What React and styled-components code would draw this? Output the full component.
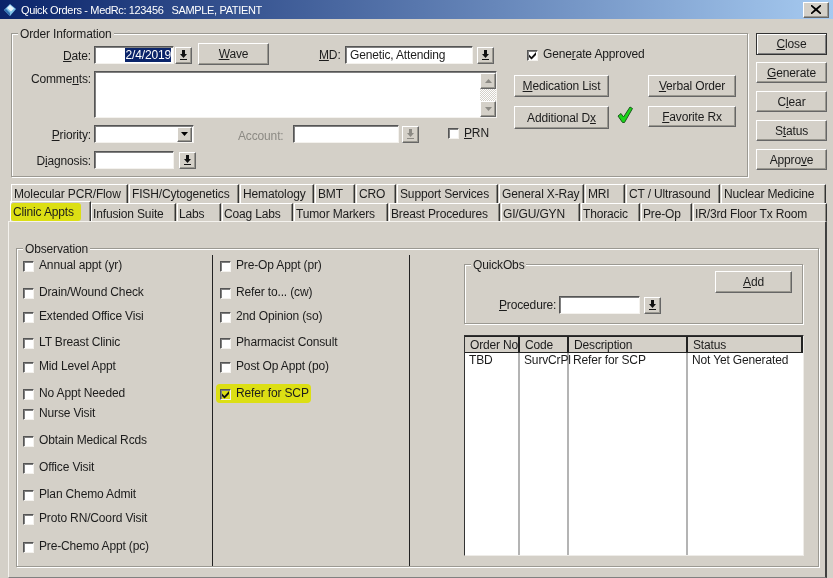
import React from 'react';
import styled, { createGlobalStyle, css } from 'styled-components';

const LEFT_ITEMS = [
  { text: 'Annual appt (yr)', gap: 0 },
  { text: 'Drain/Wound Check', gap: 7 },
  { text: 'Extended Office Visi', gap: 4 },
  { text: 'LT Breast Clinic', gap: 6 },
  { text: 'Mid Level Appt', gap: 4 },
  { text: 'No Appt Needed', gap: 7 },
  { text: 'Nurse Visit', gap: 0 },
  { text: 'Obtain Medical Rcds', gap: 7 },
  { text: 'Office Visit', gap: 7 },
  { text: 'Plan Chemo Admit', gap: 7 },
  { text: 'Proto RN/Coord Visit', gap: 4 },
  { text: 'Pre-Chemo Appt (pc)', gap: 8 },
];

const MIDDLE_ITEMS = [
  { text: 'Pre-Op Appt (pr)', gap: 0 },
  { text: 'Refer to... (cw)', gap: 7 },
  { text: '2nd Opinion (so)', gap: 4 },
  { text: 'Pharmacist Consult', gap: 6 },
  { text: 'Post Op Appt (po)', gap: 4 },
  { text: 'Refer for SCP', gap: 7, checked: true, marked: true },
];

const TOP_TABS = [
  ['Molecular PCR/Flow', 117],
  ['FISH/Cytogenetics', 110],
  ['Hematology', 74],
  ['BMT', 40],
  ['CRO', 40],
  ['Support Services', 101],
  ['General X-Ray', 85],
  ['MRI', 40],
  ['CT / Ultrasound', 94],
  ['Nuclear Medicine', 105],
];

const BOTTOM_TABS = [
  ['Infusion Suite', 85],
  ['Labs', 44],
  ['Coag Labs', 71],
  ['Tumor Markers', 94],
  ['Breast Procedures', 111],
  ['GI/GU/GYN', 79],
  ['Thoracic', 59],
  ['Pre-Op', 51],
  ['IR/3rd Floor Tx Room', 134],
];

const MARKER = '#dcdf14';

const raised = css`
  background: #d4d0c8;
  border: 1px solid;
  border-color: #fff #666 #666 #fff;
  box-shadow: inset -1px -1px 0 #9a9890;
`;

const sunken = css`
  background: #fff;
  border: 1px solid;
  border-color: #555 #f4f2ee #f4f2ee #555;
  box-shadow: inset 1px 1px 0 #808080;
`;

const etched = css`
  border: 1px solid #9b9992;
  box-shadow: 1px 1px 0 #fff, inset 1px 1px 0 #fff;
`;

const PickerArrow = ({ disabled }) => (
  <svg width="9" height="10" viewBox="0 0 9 10">
    <path
      d="M3 0h3v4h2L4.500 8 1 4h2zM1 9h7v1H1z"
      fill={disabled ? '#8c8a84' : '#111'}
    />
  </svg>
);

const Picker = ({ disabled, className }) => (
  <PickerButton className={className} type="button">
    <PickerArrow disabled={disabled} />
  </PickerButton>
);

const Check = () => (
  <svg width="9" height="9" viewBox="0 0 9 9">
    <path d="M1 3.500l2.500 2.500L8 1v3L3.500 8.500 1 6z" fill="#111" />
  </svg>
);

const Option = ({ text, checked, marked }) => (
  <OptionLabel $marked={marked}>
    <Box $marked={marked}>{checked && <Check />}</Box>
    {text}
  </OptionLabel>
);

const App = () => {
  return (
    <Window>
      <GlobalStyle />
      <TitleBar>
        <svg width="14" height="14" viewBox="0 0 14 14">
          <path d="M1 7l6-6 6 5-6 7z" fill="#7fc3e8" />
          <path d="M1 7l6 6v-3L3 6z" fill="#2f6fb0" />
          <path d="M4 5l3-3 4 3.500-3 3z" fill="#e6f4fb" />
        </svg>
        <TitleText>Quick Orders - MedRc: 123456&nbsp;&nbsp; SAMPLE, PATIENT</TitleText>
        <CloseBox type="button">
          <svg width="10" height="9" viewBox="0 0 10 9">
            <path d="M1 0l4 3.200L9 0h1v1.200L6.500 4.500 10 7.800V9H9L5 5.800 1 9H0V7.800l3.500-3.300L0 1.200V0z" fill="#000" />
          </svg>
        </CloseBox>
      </TitleBar>

      <TopArea>
        <OrderGroup>
          <Legend>Order Information</Legend>
          <FormColumn>
            <DateRow>
              <FieldLabel>
                <u>D</u>ate:
              </FieldLabel>
              <DateInput>
                <Selected>2/4/2019</Selected>
              </DateInput>
              <Picker />
              <WaveButton type="button">
                <u>W</u>ave
              </WaveButton>
              <MdLabel>
                <u>M</u>D:
              </MdLabel>
              <MdInput>Genetic, Attending</MdInput>
              <MdPicker />
            </DateRow>
            <CommentsRow>
              <FieldLabel>
                Comme<u>n</u>ts:
              </FieldLabel>
              <Comments>
                <Scrollbar>
                  <ScrollButton type="button">
                    <svg width="7" height="4" viewBox="0 0 7 4">
                      <path d="M3.500 0L7 4H0z" fill="#8c8a84" />
                    </svg>
                  </ScrollButton>
                  <ScrollTrack />
                  <ScrollButton type="button">
                    <svg width="7" height="4" viewBox="0 0 7 4">
                      <path d="M0 0h7L3.500 4z" fill="#8c8a84" />
                    </svg>
                  </ScrollButton>
                </Scrollbar>
              </Comments>
            </CommentsRow>
            <PriorityRow>
              <FieldLabel>
                <u>P</u>riority:
              </FieldLabel>
              <Select>
                <SelectButton type="button">
                  <svg width="7" height="4" viewBox="0 0 7 4">
                    <path d="M0 0h7L3.500 4z" fill="#000" />
                  </svg>
                </SelectButton>
              </Select>
              <AccountLabel>Account:</AccountLabel>
              <AccountInput />
              <Picker disabled />
              <PrnOption>
                <Box />
                <span>
                  <u>P</u>RN
                </span>
              </PrnOption>
            </PriorityRow>
            <DiagnosisRow>
              <FieldLabel>
                D<u>i</u>agnosis:
              </FieldLabel>
              <DateInput />
              <DiagnosisPicker />
            </DiagnosisRow>
          </FormColumn>

          <ActionColumn>
            <ApprovedOption>
              <Box>
                <Check />
              </Box>
              <span>
                Gene<u>r</u>ate Approved
              </span>
            </ApprovedOption>
            <ActionGrid>
              <WinButton type="button">
                <u>M</u>edication List
              </WinButton>
              <span />
              <WinButton type="button">
                <u>V</u>erbal Order
              </WinButton>
              <TallButton type="button">
                Additional D<u>x</u>
              </TallButton>
              <GreenCheck width="16" height="18" viewBox="0 0 16 18">
                <path
                  d="M1 10l3-2.500 2.500 3.500L13 1l2.500 1.500L7.500 16.500H5.500z"
                  fill="#19d419"
                  stroke="#1f5a1f"
                  strokeWidth="1"
                />
              </GreenCheck>
              <WinButton type="button">
                <u>F</u>avorite Rx
              </WinButton>
            </ActionGrid>
          </ActionColumn>
        </OrderGroup>

        <Sidebar>
          <DefaultButton type="button">
            <u>C</u>lose
          </DefaultButton>
          <SideButton type="button">
            <u>G</u>enerate
          </SideButton>
          <SideButton type="button">
            C<u>l</u>ear
          </SideButton>
          <SideButton type="button">
            S<u>t</u>atus
          </SideButton>
          <SideButton type="button">
            Appro<u>v</u>e
          </SideButton>
        </Sidebar>
      </TopArea>

      <UpperTabs>
        {TOP_TABS.map(([label, width]) => (
          <Tab key={label} $width={width}>
            {label}
          </Tab>
        ))}
      </UpperTabs>
      <LowerTabs>
        <ActiveTab>
          <Highlight>Clinic Appts</Highlight>
        </ActiveTab>
        {BOTTOM_TABS.map(([label, width]) => (
          <LowerTab key={label} $width={width}>
            {label}
          </LowerTab>
        ))}
      </LowerTabs>

      <Panel>
        <ObservationGroup>
          <Legend>Observation</Legend>
          <Columns>
            <OptionColumn $width={196} $pad={6}>
              {LEFT_ITEMS.map(item => (
                <OptionSlot key={item.text} $gap={item.gap}>
                  <Option {...item} />
                </OptionSlot>
              ))}
            </OptionColumn>
            <OptionColumn $width={197} $pad={7}>
              {MIDDLE_ITEMS.map(item => (
                <OptionSlot key={item.text} $gap={item.gap}>
                  <Option {...item} />
                </OptionSlot>
              ))}
            </OptionColumn>
            <QuickColumn>
              <QuickGroup>
                <Legend>QuickObs</Legend>
                <AddButton type="button">
                  <u>A</u>dd
                </AddButton>
                <ProcedureRow>
                  <span>
                    <u>P</u>rocedure:
                  </span>
                  <ProcedureInput />
                  <Picker />
                </ProcedureRow>
              </QuickGroup>
              <OrdersTable>
                <HeadCell>Order No</HeadCell>
                <HeadCell>Code</HeadCell>
                <HeadCell>Description</HeadCell>
                <HeadCell>Status</HeadCell>
                <BodyCell>TBD</BodyCell>
                <BodyCell>SurvCrPl</BodyCell>
                <BodyCell>Refer for SCP</BodyCell>
                <BodyCell>Not Yet Generated</BodyCell>
              </OrdersTable>
            </QuickColumn>
          </Columns>
        </ObservationGroup>
      </Panel>
    </Window>
  );
};

const GlobalStyle = createGlobalStyle`
  html, body {
    margin: 0;
    padding: 0;
    background: #d4d0c8;
  }
  u {
    text-underline-offset: 1px;
  }
`;

const Window = styled.div`
  width: 833px;
  height: 578px;
  overflow: hidden;
  background: #d4d0c8;
  color: #1c1c1c;
  font: 12px/14px 'Liberation Sans', Arial, sans-serif;
  letter-spacing: -0.15px;
  filter: blur(0.35px);
`;

const TitleBar = styled.div`
  height: 19px;
  display: flex;
  align-items: center;
  padding: 0 4px 0 3px;
  box-sizing: border-box;
  background: linear-gradient(90deg, #0a246a, #a6caf0);
`;

const TitleText = styled.span`
  margin-left: 4px;
  color: #fff;
  font-size: 11px;
  letter-spacing: -0.35px;
`;

const WinButton = styled.button`
  ${raised};
  box-sizing: border-box;
  padding: 0;
  color: inherit;
  font: inherit;
  letter-spacing: inherit;
  white-space: nowrap;
`;

const CloseBox = styled(WinButton)`
  width: 26px;
  height: 16px;
  margin-left: auto;
  display: flex;
  align-items: center;
  justify-content: center;
`;

const TopArea = styled.div`
  display: flex;
  align-items: flex-start;
  gap: 8px;
  padding: 14px 0 0 11px;
`;

const Legend = styled.span`
  position: absolute;
  top: -7px;
  left: 6px;
  padding: 0 2px;
  background: #d4d0c8;
`;

const OrderGroup = styled.div`
  ${etched};
  position: relative;
  box-sizing: border-box;
  width: 737px;
  height: 144px;
  display: flex;
`;

const FormColumn = styled.div`
  width: 502px;
  padding-top: 11px;
`;

const FormRow = styled.div`
  display: flex;
  align-items: center;
`;

const DateRow = styled(FormRow)`
  height: 20px;
`;

const CommentsRow = styled(FormRow)`
  align-items: flex-start;
  margin-top: 6px;
`;

const PriorityRow = styled(FormRow)`
  height: 18px;
  margin-top: 7px;
`;

const DiagnosisRow = styled(FormRow)`
  height: 18px;
  margin-top: 8px;
`;

const FieldLabel = styled.label`
  width: 79px;
  margin-right: 3px;
  padding-top: 1px;
  text-align: right;
  white-space: nowrap;
`;

const TextBox = styled.div`
  ${sunken};
  box-sizing: border-box;
  height: 18px;
  display: flex;
  align-items: center;
`;

const DateInput = styled(TextBox)`
  width: 80px;
  justify-content: flex-end;
  padding-right: 2px;
`;

const Selected = styled.span`
  background: #0a246a;
  color: #fff;
`;

const PickerButton = styled(WinButton)`
  width: 17px;
  height: 17px;
  margin-left: 1px;
  display: flex;
  align-items: center;
  justify-content: center;
`;

const WaveButton = styled(WinButton)`
  width: 71px;
  height: 22px;
  margin: 0 0 2px 6px;
`;

const MdLabel = styled.label`
  margin-left: 50px;
  width: 26px;
`;

const MdInput = styled(TextBox)`
  width: 128px;
  padding-left: 4px;
`;

const MdPicker = styled(Picker)`
  margin-left: 4px;
`;

const Comments = styled(TextBox)`
  width: 403px;
  height: 47px;
  justify-content: flex-end;
  align-items: stretch;
  padding: 1px 0 0;
`;

const Scrollbar = styled.div`
  width: 16px;
  display: flex;
  flex-direction: column;
`;

const ScrollButton = styled(WinButton)`
  height: 16px;
  display: flex;
  align-items: center;
  justify-content: center;
`;

const ScrollTrack = styled.div`
  flex: 1;
  background: repeating-conic-gradient(#fff 0 25%, #d4d0c8 0 50%) 0 0 / 2px 2px;
`;

const Select = styled(TextBox)`
  width: 100px;
  justify-content: flex-end;
  padding-right: 1px;
`;

const SelectButton = styled(WinButton)`
  width: 15px;
  height: 15px;
  display: flex;
  align-items: center;
  justify-content: center;
`;

const AccountLabel = styled.label`
  margin: 3px 0 0 44px;
  width: 55px;
  color: #8c8a84;
`;

const AccountInput = styled(TextBox)`
  width: 106px;
  margin-right: 2px;
`;

const DiagnosisPicker = styled(Picker)`
  margin-left: 5px;
`;

const Box = styled.span`
  ${sunken};
  ${p => p.$marked && `background: ${MARKER};`}
  box-sizing: border-box;
  width: 11px;
  height: 11px;
  margin-top: 2px;
  flex: none;
  display: flex;
  align-items: center;
  justify-content: center;
`;

const PrnOption = styled.label`
  margin: 0 0 3px 29px;
  display: flex;
  align-items: center;
  gap: 5px;
`;

const ActionColumn = styled.div`
  padding-top: 13px;
`;

const ApprovedOption = styled.label`
  margin-left: 13px;
  display: flex;
  align-items: center;
  gap: 5px;
`;

const ActionGrid = styled.div`
  margin-top: 14px;
  display: grid;
  grid-template-columns: 95px 39px 88px;
  grid-template-rows: 22px 21px;
  row-gap: 9px;
`;

const TallButton = styled(WinButton)`
  height: 23px;
`;

const GreenCheck = styled.svg`
  margin: 0 0 0 8px;
`;

const Sidebar = styled.div`
  width: 71px;
  display: flex;
  flex-direction: column;
  gap: 8px;
`;

const SideButton = styled(WinButton)`
  height: 21px;
`;

const DefaultButton = styled(SideButton)`
  height: 22px;
  margin-bottom: -1px;
  border-color: #333;
  box-shadow: inset 1px 1px 0 #fff, inset -1px -1px 0 #808080;
`;

const TabRow = styled.div`
  display: flex;
  gap: 1px;
`;

const UpperTabs = styled(TabRow)`
  margin: 7px 0 0 11px;
  height: 19px;
`;

const LowerTabs = styled(TabRow)`
  margin-left: 10px;
  height: 18px;
`;

const Tab = styled.div`
  box-sizing: border-box;
  width: ${p => p.$width}px;
  padding: 2px 0 0 2px;
  border-top: 1px solid #fff;
  border-left: 1px solid #fff;
  border-right: 1px solid #333;
  box-shadow: inset -1px 0 0 #8a8880;
  white-space: nowrap;
  overflow: hidden;
`;

const LowerTab = styled(Tab)`
  padding: 3px 0 0 1px;
`;

const ActiveTab = styled(Tab)`
  width: 81px;
  height: 20px;
  margin: -2px -1px 0 0;
  padding: 1px 0 0;
`;

const Highlight = styled.div`
  height: 18px;
  width: 70px;
  padding: 2px 0 0 2px;
  box-sizing: border-box;
  background: ${MARKER};
  border-radius: 3px;
`;

const Panel = styled.div`
  box-sizing: border-box;
  width: 819px;
  height: 357px;
  margin-left: 8px;
  padding: 26px 6px 0 7px;
  border-top: 1px solid #f4f2ee;
  border-left: 1px solid #f4f2ee;
  border-right: 2px solid #404040;
  border-bottom: 1px solid #808080;
`;

const ObservationGroup = styled.div`
  ${etched};
  position: relative;
  box-sizing: border-box;
  height: 319px;
`;

const Columns = styled.div`
  height: 100%;
  padding-top: 6px;
  box-sizing: border-box;
  display: flex;
`;

const OptionColumn = styled.div`
  box-sizing: border-box;
  width: ${p => p.$width}px;
  padding-left: ${p => p.$pad}px;
  border-right: 1px solid #222;
`;

const OptionSlot = styled.div`
  height: 20px;
  margin-top: ${p => p.$gap}px;
  display: flex;
  align-items: center;
`;

const OptionLabel = styled.label`
  display: flex;
  align-items: center;
  gap: 5px;
  white-space: nowrap;
  ${p =>
    p.$marked &&
    css`
      height: 19px;
      margin-left: -4px;
      padding: 0 2px 0 4px;
      background: ${MARKER};
      border-radius: 4px;
    `}
`;

const QuickColumn = styled.div`
  flex: 1;
  padding: 9px 0 0 54px;
`;

const QuickGroup = styled.div`
  ${etched};
  position: relative;
  box-sizing: border-box;
  width: 339px;
  height: 60px;
  display: flex;
  flex-direction: column;
  align-items: flex-end;
`;

const AddButton = styled(WinButton)`
  width: 77px;
  height: 22px;
  margin: 6px 10px 0 0;
`;

const ProcedureRow = styled.div`
  align-self: flex-start;
  margin: 3px 0 0 34px;
  display: flex;
  align-items: center;
`;

const ProcedureInput = styled(TextBox)`
  width: 81px;
  margin: 0 3px;
`;

const OrdersTable = styled.div`
  box-sizing: border-box;
  width: 340px;
  height: 221px;
  margin-top: 11px;
  display: grid;
  grid-template-columns: 55px 49px 119px 1fr;
  grid-template-rows: 17px 1fr;
  background: #fff;
  border: 1px solid;
  border-color: #333 #eeece8 #eeece8 #333;
`;

const HeadCell = styled.div`
  box-sizing: border-box;
  padding: 1px 0 0 5px;
  background: #d4d0c8;
  border-top: 1px solid #222;
  border-bottom: 1px solid #222;
  border-right: 2px solid #222;
  white-space: nowrap;
  overflow: hidden;
`;

const BodyCell = styled.div`
  min-width: 0;
  padding: 0 0 0 4px;
  border-right: 2px solid #b4b4b4;
  white-space: nowrap;
  &:last-child {
    border-right: 0;
  }
`;

export default App;
